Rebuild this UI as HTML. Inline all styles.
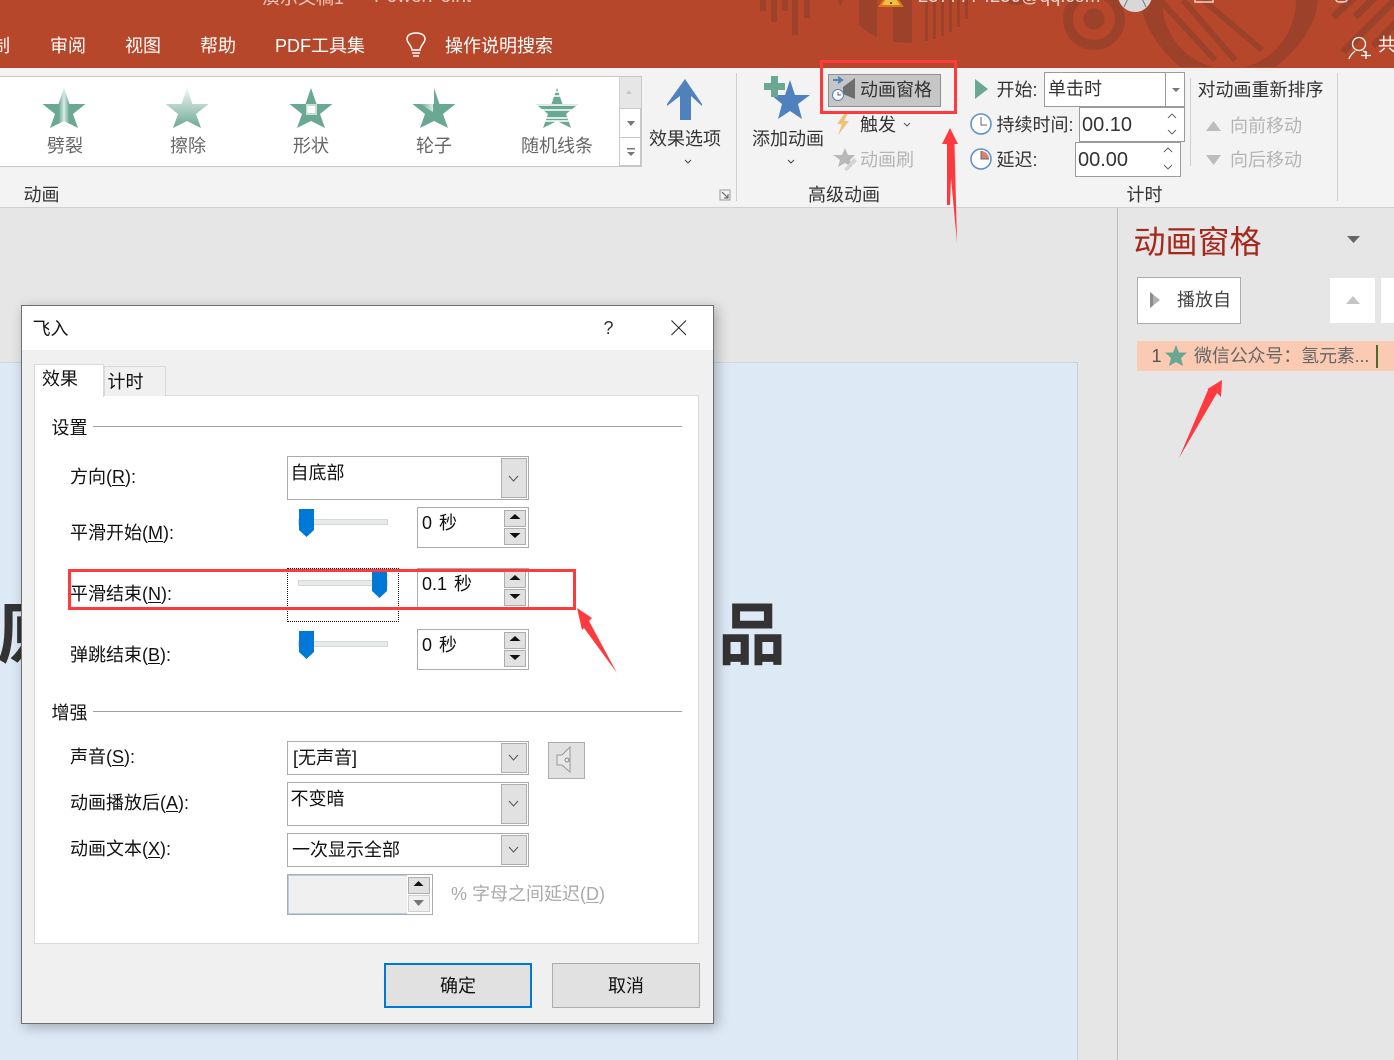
<!DOCTYPE html>
<html><head><meta charset="utf-8">
<style>
html,body{margin:0;padding:0}
body{width:1394px;height:1060px;overflow:hidden;position:relative;background:#e6e6e6;font-family:"Liberation Sans","Noto Sans CJK SC",sans-serif;font-size:18px;color:#222}
div{position:absolute;box-sizing:border-box}
.t{white-space:nowrap;line-height:24px;height:24px}
.w{color:#fff}
.g{color:#666}
.d{color:#b4b4b4}
.k{color:#111}
.s{word-spacing:2px}
u{text-underline-offset:2px}
.box{background:#fff;border:1px solid #ababab}
.dd{background:#e1e1e1;border:1px solid #adadad}
.sp{background:#e1e1e1;border:1px solid #adadad;width:22px;height:17px}
.track{background:#e7eaea;border:1px solid #d6d6d6;height:6px;width:90px}
svg{position:absolute;overflow:visible}
</style></head><body>

<!-- title bar -->
<div style="left:0;top:0;width:1394px;height:68px;background:#b7472a"></div>
<svg style="left:0;top:0" width="1394" height="68" viewBox="0 0 1394 68">
<g fill="#9c412a">
<rect x="760" y="0" width="6" height="11"/><rect x="771" y="0" width="6" height="22"/><rect x="782" y="0" width="6" height="11"/><rect x="792" y="0" width="6" height="35"/><rect x="804" y="0" width="6" height="18"/>
<path d="M838 0H843L840 7Z"/>
<path d="M859 0H877V37L866 31L859 25Z"/>
<path d="M893 0H912V43L893 42Z"/>
<rect x="925" y="0" width="3" height="41"/><rect x="933" y="0" width="3" height="39"/><rect x="941" y="0" width="3" height="36"/><rect x="949" y="0" width="3" height="32"/><rect x="957" y="0" width="3" height="27"/><rect x="965" y="0" width="3" height="19"/>
<path d="M1003 0Q1016 10 1030 0Z"/>
</g>
<circle cx="1094" cy="19" r="26" fill="none" stroke="#9c412a" stroke-width="10"/>
<circle cx="1094" cy="19" r="10.500" fill="#9c412a"/>
<!-- big ring -->
<path d="M1140 0C1143 26 1160 50 1180 67H1275C1298 50 1316 26 1318 0Z" fill="#9c412a"/>
<path d="M1162 0A67 69 0 0 0 1296 0Z" fill="#b7472a"/>
<path d="M1265 46Q1240 58 1220 56L1180 10L1200 0H1240Z" fill="#b7472a"/>
<g stroke="#9c412a" stroke-width="6" fill="none">
<path d="M1160 0L1215 60"/><path d="M1183 0L1235 60"/><path d="M1203 0L1262 50"/>
</g>
<g stroke="#9c412a" stroke-width="7" fill="none">
<path d="M1333 17L1355 -3"/><path d="M1355 17L1375 -3"/><path d="M1343 52L1397 -2"/><path d="M1373 46L1397 22"/>
</g>
<path d="M880 6L891 -10L902 6Z" fill="#f0c040" stroke="#e0761a" stroke-width="2"/>
<rect x="890" y="2" width="2" height="2" fill="#553"/>
<circle cx="1135" cy="-5" r="17" fill="#d8d8d8"/>
<path d="M1124 7Q1128 -2 1130 -4M1146 7Q1142 -2 1140 -4" fill="none" stroke="#777"/>
<path d="M1195 0V2H1213V0M1336 0Q1336 2 1341 2Q1347 2 1347 0" fill="none" stroke="#f3d5cc" stroke-width="1.500"/>
<!-- bulb -->
<path d="M412 50C411.500 45 407 43 407 39C407 35 411 33 416 33C421 33 425 35 425 39C425 43 420.500 45 420 50Z" fill="none" stroke="#fff" stroke-width="1.500"/>
<path d="M412 53H420M413 56H419" stroke="#fff" stroke-width="1.500"/>
<!-- person -->
<circle cx="1359" cy="44" r="6.500" fill="none" stroke="#fff" stroke-width="1.300"/>
<path d="M1349 59C1350 55 1353 53 1355 51M1363 51L1367 53" fill="none" stroke="#fff" stroke-width="1.300"/>
<path d="M1366 51V59M1361 55.500H1371" stroke="#fff" stroke-width="1.300"/>
</svg>
<div class="t" style="left:262px;top:-14px;color:#f0c9bd">演示文稿1</div>
<div class="t" style="left:352px;top:-14px;color:#f0c9bd">-</div>
<div class="t" style="left:374px;top:-15px;color:#f0c9bd;font-size:19px">PowerPoint</div>
<div class="t" style="left:918px;top:-16px;color:#f0d5cc;font-size:18.500px">2577774250@qq.com</div>
<div class="t w" style="left:-8px;top:34px">制</div>
<div class="t w" style="left:50px;top:34px">审阅</div>
<div class="t w" style="left:125px;top:34px">视图</div>
<div class="t w" style="left:200px;top:34px">帮助</div>
<div class="t w" style="left:275px;top:34px">PDF工具集</div>
<div class="t w" style="left:445px;top:34px">操作说明搜索</div>
<div class="t w" style="left:1378px;top:33px">共</div>

<!-- ribbon -->
<div style="left:0;top:68px;width:1394px;height:140px;background:#f3f3f3;border-bottom:1px solid #d0d0d0"></div>
<div style="left:-2px;top:76px;width:644px;height:91px;background:#fff;border:1px solid #c8c8c8"></div>
<div style="left:619px;top:77px;width:22px;height:32px;background:#e6e6e6;border-left:1px solid #d0d0d0"></div>
<div style="left:619px;top:108px;width:22px;height:30px;background:#fff;border:1px solid #c8c8c8"></div>
<div style="left:619px;top:137px;width:22px;height:29px;background:#fff;border:1px solid #c8c8c8"></div>
<svg style="left:0;top:0" width="700" height="210" viewBox="0 0 700 210">
<defs>
<linearGradient id="gs" x1="0" x2="1" y1="0" y2="0"><stop offset="0.38" stop-color="#6ba893"/><stop offset="0.5" stop-color="#d9ebe4"/><stop offset="0.62" stop-color="#6ba893"/></linearGradient>
<linearGradient id="gw" x1="0" x2="0" y1="0" y2="1"><stop offset="0" stop-color="#f0f7f4"/><stop offset="0.45" stop-color="#b5d4c9"/><stop offset="1" stop-color="#6ba893"/></linearGradient>
<linearGradient id="gl" x1="0" x2="1" y1="0" y2="0"><stop offset="0" stop-color="#6ba893"/><stop offset="1" stop-color="#dcebe5"/></linearGradient>
<polygon id="st" points="0,-22 5.500,-6 21.500,-6 9,4 14,18 0,11 -14,18 -9,4 -21.500,-6 -5.500,-6"/>
</defs>
<use href="#st" x="64" y="110" fill="url(#gs)"/>
<use href="#st" x="187" y="110" fill="url(#gw)"/>
<use href="#st" x="311" y="110" fill="#6ba893"/>
<rect x="306" y="104" width="11" height="11" fill="#c6dfd5"/><rect x="307.500" y="106" width="7.500" height="7" fill="#fff"/>
<use href="#st" x="434" y="110" fill="#6ba893"/>
<path d="M427 88H434V104H428.500Z" fill="#fff"/>
<path d="M420 104L433 112V104Z" fill="url(#gl)"/>
<use href="#st" x="557" y="110" fill="#6ba893"/>
<g stroke="#fff" stroke-width="1.500"><path d="M530 92H585M530 96H585M530 105H585M530 110H585M530 118H585M530 121H585"/></g>
<path d="M626 94H632L629 90Z" fill="#c8c8c8"/>
<path d="M627 121H635L631 126Z" fill="#777"/>
<path d="M627 152H635L631 156Z" fill="#777"/>
<rect x="627" y="148" width="8" height="1.500" fill="#777"/>
<path d="M685 79L702 104V106L691 96V120H680V96L667 106V104Z" fill="#4f81bd"/>
<path d="M685 160L688 163L691 160" fill="none" stroke="#444"/>
<path d="M720 190H730V200H720Z" fill="none" stroke="#999"/><path d="M722 192L728 198M728 194V198H724" fill="none" stroke="#555"/>
</svg>
<div class="t g" style="left:47px;top:134px">劈裂</div>
<div class="t g" style="left:170px;top:134px">擦除</div>
<div class="t g" style="left:293px;top:134px">形状</div>
<div class="t g" style="left:416px;top:134px">轮子</div>
<div class="t g" style="left:521px;top:134px">随机线条</div>
<div class="t" style="left:649px;top:127px;color:#333">效果选项</div>
<div class="t" style="left:23.500px;top:183px;color:#333">动画</div>

<div style="left:736px;top:73px;width:1px;height:128px;background:#d0d0d0"></div>
<div style="left:1337px;top:73px;width:1px;height:128px;background:#d0d0d0"></div>
<div style="left:1190px;top:78px;width:1px;height:88px;background:#d0d0d0"></div>
<div style="left:828px;top:74px;width:113px;height:33px;background:#c6c6c6;border:1px solid #8f8f8f"></div>
<svg style="left:0;top:0" width="1394" height="260" viewBox="0 0 1394 260">
<!-- add animation star -->
<polygon points="790,80 795,95 810,95 798,104 802,119 790,111 778,119 782,104 771,95 785,95" fill="#4f81bd"/>
<path d="M771 76H778V83H785V90H778V97H771V90H764V83H771Z" fill="#6ba893"/>
<path d="M788 160L791 163L794 160" fill="none" stroke="#444"/>
<!-- pane icon -->
<path d="M833 80H841M838 77L842 80L838 83" fill="none" stroke="#4f81bd" stroke-width="2"/>
<path d="M843 87L855 78V99L843 94Z" fill="#6e6e6e"/>
<circle cx="838" cy="95" r="5.500" fill="#fff" stroke="#4f81bd"/><path d="M838 92V95H841" fill="none" stroke="#555"/>
<!-- trigger -->
<path d="M845 113L837 124H842L838 135L849 121H844L848 113Z" fill="#f0c078"/>
<path d="M904 123L907 126L910 123" fill="none" stroke="#555"/>
<!-- brush -->
<polygon points="845,148 848,155 855,155 850,160 852,167 845,163 838,167 840,160 833,155 842,155" fill="#b8b8b8"/>
<path d="M844 169L854 158L857 161L847 171Z" fill="#d4d4d4"/>
<!-- start tri -->
<path d="M975 79L988 89L975 99Z" fill="#6ba893"/>
<!-- clocks -->
<circle cx="981" cy="124" r="10" fill="#fff" stroke="#5b8fc5" stroke-width="1.500"/><path d="M981 117V125H987" fill="none" stroke="#666"/>
<circle cx="981" cy="159" r="10" fill="#fff" stroke="#5b8fc5" stroke-width="1.500"/><path d="M981 159V151A8 8 0 0 1 989 159Z" fill="#d98070"/><path d="M981 151V159H989" fill="none" stroke="#666"/>
<!-- reorder arrows -->
<path d="M1206 131L1213.500 121L1221 131Z" fill="#bcbcbc"/>
<path d="M1206 155L1213.500 165L1221 155Z" fill="#bcbcbc"/>
</svg>
<div class="t" style="left:752px;top:127px;color:#333">添加动画</div>
<div class="t" style="left:860px;top:78px;color:#333">动画窗格</div>
<div class="t" style="left:860px;top:113px;color:#333">触发</div>
<div class="t d" style="left:860px;top:148px">动画刷</div>
<div class="t" style="left:808px;top:183px;color:#333">高级动画</div>
<div class="t" style="left:996.500px;top:78px;color:#333">开始:</div>
<div class="t" style="left:996.500px;top:113px;color:#333">持续时间:</div>
<div class="t" style="left:996.500px;top:148px;color:#333">延迟:</div>
<div style="left:1044px;top:72px;width:141px;height:35px;background:#fff;border:1px solid #9a9a9a"></div>
<div style="left:1165px;top:72px;width:1px;height:35px;background:#9a9a9a"></div>
<div class="t" style="left:1048px;top:77px;color:#333">单击时</div>
<div style="left:1079px;top:107px;width:106px;height:35px;background:#fff;border:1px solid #9a9a9a"></div>
<div class="t" style="left:1082px;top:113px;font-size:20px;color:#333">00.10</div>
<div style="left:1075px;top:142px;width:106px;height:35px;background:#fff;border:1px solid #9a9a9a"></div>
<div class="t" style="left:1078px;top:148px;font-size:20px;color:#333">00.00</div>
<svg style="left:0;top:0" width="1394" height="200" viewBox="0 0 1394 200">
<path d="M1172 88H1180L1176 92Z" fill="#777"/>
<path d="M1168 118L1172 114L1176 118M1168 130L1172 134L1176 130M1164 152L1168 148L1172 152M1164 165L1168 169L1172 165" fill="none" stroke="#666"/>
</svg>
<div class="t" style="left:1197.500px;top:78px;color:#333">对动画重新排序</div>
<div class="t d" style="left:1230px;top:114px">向前移动</div>
<div class="t d" style="left:1230px;top:148px">向后移动</div>
<div class="t" style="left:1126.500px;top:183px;color:#333">计时</div>

<!-- slide area -->
<div style="left:0;top:362px;width:1078px;height:698px;background:#dde9f5;border-right:1px solid #c9ced4;border-top:1px solid #d0d5da"></div>
<div style="left:-3px;top:596px;font-size:68px;font-weight:bold;line-height:80px;height:80px;color:#333;white-space:nowrap">原</div>
<div style="left:718px;top:596px;font-size:68px;font-weight:bold;line-height:80px;height:80px;color:#333;white-space:nowrap">品</div>

<!-- right pane -->
<div style="left:1117px;top:208px;width:277px;height:852px;background:#e6e6e6;border-left:1px solid #bdbdbd"></div>
<div style="left:1133.500px;top:220px;font-size:32px;line-height:44px;height:44px;color:#a5281b;white-space:nowrap">动画窗格</div>
<svg style="left:1340px;top:230px" width="20" height="20"><path d="M7 6H20L13.500 13Z" fill="#666"/></svg>
<div style="left:1137px;top:277px;width:104px;height:47px;background:#fff;border:1px solid #ababab"></div>
<svg style="left:1150px;top:292px" width="12" height="18"><path d="M0 0L10 8L0 16Z" fill="#b0b0b0"/><path d="M0 0L3 2.400V13.600L0 16Z" fill="#8c8c8c"/></svg>
<div class="t" style="left:1177px;top:288px;color:#444">播放自</div>
<div style="left:1330px;top:278px;width:45px;height:45px;background:#fff"></div>
<svg style="left:1346px;top:295px" width="14" height="10"><path d="M0 9L7 1L14 9Z" fill="#c4c4c4"/></svg>
<div style="left:1381px;top:278px;width:13px;height:45px;background:#fff"></div>
<div style="left:1137px;top:341px;width:257px;height:30px;background:#fbcab2"></div>
<div class="t" style="left:1151.500px;top:344px;color:#555">1</div>
<svg style="left:1164px;top:343px" width="24" height="24" viewBox="-12 -13 24 24"><polygon points="0,-11 3,-3.500 11,-3.500 5,2 7,10 0,6 -7,10 -5,2 -11,-3.500 -3,-3.500" fill="#6ba893"/></svg>
<div class="t" style="left:1194px;top:344px;color:#666;letter-spacing:-.15px">微信公众号：氢元素...</div>
<div style="left:1376px;top:345px;width:2px;height:23px;background:#4b6b2b"></div>

<!-- dialog -->
<div style="left:21px;top:305px;width:693px;height:719px;background:#f0f0f0;border:1px solid #6e6e6e;box-shadow:3px 3px 12px rgba(0,0,0,.28)"></div>
<div style="left:22px;top:306px;width:691px;height:44px;background:#fff"></div>
<div class="t k" style="left:32.500px;top:317px">飞入</div>
<div class="t" style="left:603.500px;top:316px;color:#333">?</div>
<svg style="left:671px;top:320px" width="16" height="16"><path d="M0.500 0.500L15 15M15 0.500L0.500 15" stroke="#222" fill="none"/></svg>
<div style="left:34px;top:395px;width:665px;height:549px;background:#fff;border:1px solid #d9d9d9"></div>
<div style="left:104px;top:366px;width:62px;height:30px;background:#f0f0f0;border:1px solid #d9d9d9;border-bottom:none"></div>
<div style="left:34px;top:364px;width:70px;height:33px;background:#fff;border:1px solid #d9d9d9;border-bottom:none"></div>
<div class="t k" style="left:42px;top:367px">效果</div>
<div class="t k" style="left:107.500px;top:370px">计时</div>

<div class="t k" style="left:51.500px;top:416px">设置</div>
<div style="left:93px;top:426px;width:589px;height:1px;background:#a0a0a0"></div>
<div class="t k" style="left:70px;top:465px">方向(<u>R</u>):</div>
<div class="t k" style="left:70px;top:521px">平滑开始(<u>M</u>):</div>
<div class="t k" style="left:70px;top:582px">平滑结束(<u>N</u>):</div>
<div class="t k" style="left:70px;top:643px">弹跳结束(<u>B</u>):</div>

<div class="box" style="left:287px;top:456px;width:242px;height:44px"></div>
<div class="dd" style="left:501px;top:458px;width:26px;height:40px"></div>
<div class="t k" style="left:290.500px;top:461px">自底部</div>

<!-- sliders -->
<div class="track" style="left:298px;top:519px"></div>
<div class="track" style="left:298px;top:580px"></div>
<div class="track" style="left:298px;top:641px"></div>
<div style="left:287px;top:568px;width:112px;height:54px;border:1px dotted #111"></div>
<svg style="left:0;top:0" width="700" height="700" viewBox="0 0 700 700">
<path d="M299 509H314V530L306.500 537L299 530Z" fill="#0078d7"/>
<path d="M372 571H387V591L379.500 598L372 591Z" fill="#0078d7"/>
<path d="M299 631H314V652L306.500 659L299 652Z" fill="#0078d7"/>
</svg>

<div class="box" style="left:417px;top:507px;width:112px;height:41px"></div>
<div class="box" style="left:417px;top:568px;width:112px;height:41px"></div>
<div class="box" style="left:417px;top:629px;width:112px;height:41px"></div>
<div class="t k s" style="left:422px;top:511px">0 秒</div>
<div class="t k s" style="left:422px;top:572px">0.1 秒</div>
<div class="t k s" style="left:422px;top:633px">0 秒</div>
<div class="sp" style="left:504px;top:510px"></div><div class="sp" style="left:504px;top:528px"></div>
<div class="sp" style="left:504px;top:571px"></div><div class="sp" style="left:504px;top:589px"></div>
<div class="sp" style="left:504px;top:632px"></div><div class="sp" style="left:504px;top:650px"></div>

<div class="t k" style="left:51.500px;top:701px">增强</div>
<div style="left:93px;top:711px;width:589px;height:1px;background:#a0a0a0"></div>
<div class="t k" style="left:70px;top:745px">声音(<u>S</u>):</div>
<div class="t k" style="left:70px;top:791px">动画播放后(<u>A</u>):</div>
<div class="t k" style="left:70px;top:837px">动画文本(<u>X</u>):</div>

<div class="box" style="left:287px;top:741px;width:242px;height:34px"></div>
<div class="dd" style="left:501px;top:743px;width:26px;height:30px"></div>
<div class="t k" style="left:293px;top:746px">[无声音]</div>
<div class="dd" style="left:548px;top:742px;width:37px;height:37px"></div>
<div class="box" style="left:287px;top:782px;width:242px;height:44px"></div>
<div class="dd" style="left:501px;top:784px;width:26px;height:40px"></div>
<div class="t k" style="left:290.500px;top:787px">不变暗</div>
<div class="box" style="left:287px;top:833px;width:242px;height:34px"></div>
<div class="dd" style="left:501px;top:835px;width:26px;height:30px"></div>
<div class="t k" style="left:292px;top:838px">一次显示全部</div>

<div class="box" style="left:287px;top:874px;width:146px;height:41px"></div>
<div style="left:288px;top:875px;width:119px;height:39px;background:#f0f0f0;border:1px solid #b9cde5;border-right:none"></div>
<div class="sp" style="left:408px;top:877px"></div>
<div style="left:408px;top:895px;width:22px;height:17px;background:#f0f0f0;border:1px solid #d0d0d0"></div>
<div class="t" style="left:451px;top:882px;color:#aaa">% 字母之间延迟(<u>D</u>)</div>

<div style="left:384px;top:963px;width:148px;height:45px;background:#e1e1e1;border:2px solid #0078d7"></div>
<div class="t k" style="left:440px;top:974px">确定</div>
<div style="left:552px;top:963px;width:148px;height:45px;background:#e1e1e1;border:1px solid #adadad"></div>
<div class="t k" style="left:608px;top:974px">取消</div>

<svg style="left:0;top:0" width="1394" height="1060" viewBox="0 0 1394 1060">
<!-- dropdown chevrons -->
<g fill="none" stroke="#555"><path d="M509 476L513.500 481L518 476M509 755L513.500 760L518 755M509 801L513.500 806L518 801M509 847L513.500 852L518 847"/></g>
<!-- spin arrows -->
<g fill="#111"><path d="M509.500 519L515 514L520.500 519ZM509.500 533H520.500L515 538ZM509.500 580L515 575L520.500 580ZM509.500 594H520.500L515 599ZM509.500 641L515 636L520.500 641ZM509.500 655H520.500L515 660ZM413.500 886L418.500 881L423.500 886Z"/></g>
<path d="M413.500 900H424L418.500 906Z" fill="#777"/>
<!-- speaker -->
<path d="M557 755H562L570 747V772L562 765H557Z" fill="#e8e8e8" stroke="#999"/>
<circle cx="567" cy="760" r="2" fill="none" stroke="#888"/>
<!-- annotations -->
<g fill="none" stroke="#fd3a3d" stroke-width="3">
<rect x="821.500" y="61.500" width="134" height="51"/>
<rect x="69.500" y="570.500" width="505" height="38"/>
</g>
<g fill="#fd3a3d">
<path d="M950 128L958 144H954.500L957 243L951 178L950 205H947V144H942Z"/>
<path d="M577 608L592 618L589 621L617 673L584 628L582 630Z"/>
<path d="M1222 380L1221 397L1217 393L1179 458L1208 390L1207.500 389Z"/>
</g>
</svg>
</body></html>
